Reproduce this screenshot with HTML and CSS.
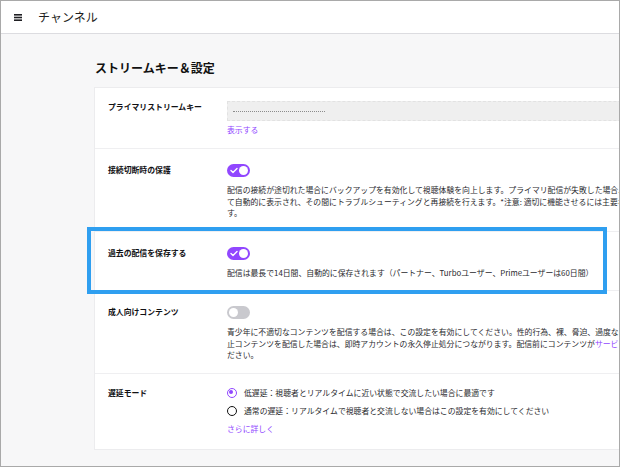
FILE: index.html
```html
<!DOCTYPE html>
<html lang="ja">
<head>
<meta charset="utf-8">
<title>チャンネル</title>
<link rel="stylesheet" href="styles.css">
</head>
<body>
<div class="frame">
  <header class="topbar">
    <svg class="menu-icon" width="8" height="7" viewBox="0 0 8 7" aria-hidden="true">
      <rect x="0" y="0" width="8" height="1.6"/>
      <rect x="0" y="2.7" width="8" height="1.6"/>
      <rect x="0" y="5.4" width="8" height="1.6"/>
    </svg>
    <span class="topbar-title">チャンネル</span>
  </header>

  <main class="page">
    <h1 class="page-title">ストリームキー＆設定</h1>

    <section class="card">
      <div class="row row-key">
        <div class="row-label">プライマリストリームキー</div>
        <div class="row-body">
          <div class="key-field"><span class="key-mask"></span></div>
          <a class="link show-link">表示する</a>
        </div>
      </div>

      <div class="row">
        <div class="row-label">接続切断時の保護</div>
        <div class="row-body">
          <span class="toggle on">
            <svg class="check" width="8" height="7" viewBox="0 0 8 7" aria-hidden="true"><polyline points="1,3.6 3,5.5 7,1.5"/></svg>
          </span>
          <p class="desc">配信の接続が途切れた場合にバックアップを有効化して視聴体験を向上します。プライマリ配信が失敗した場合、バックアップ用の配信が視聴者に対して自動的に表示され、その間にトラブルシューティングと再接続を行えます。*注意: 適切に機能させるには主要な配信ソフトウェアサポートが必要です。</p>
        </div>
      </div>

      <div class="row row-highlighted">
        <div class="row-label">過去の配信を保存する</div>
        <div class="row-body">
          <span class="toggle on">
            <svg class="check" width="8" height="7" viewBox="0 0 8 7" aria-hidden="true"><polyline points="1,3.6 3,5.5 7,1.5"/></svg>
          </span>
          <p class="desc">配信は最長で14日間、自動的に保存されます（パートナー、Turboユーザー、Primeユーザーは60日間）</p>
        </div>
        <span class="highlight"></span>
      </div>

      <div class="row">
        <div class="row-label">成人向けコンテンツ</div>
        <div class="row-body">
          <span class="toggle off"></span>
          <p class="desc">青少年に不適切なコンテンツを配信する場合は、この設定を有効にしてください。性的行為、裸、脅迫、過度な暴力などは、常に禁止されています。禁止コンテンツを配信した場合は、即時アカウントの永久停止処分につながります。配信前にコンテンツが<a class="link">サービス規約</a>を守っているかを必ず確認してください。</p>
        </div>
      </div>

      <div class="row row-delay">
        <div class="row-label">遅延モード</div>
        <div class="row-body">
          <div class="radio-option"><span class="radio checked"></span><span>低遅延：視聴者とリアルタイムに近い状態で交流したい場合に最適です</span></div>
          <div class="radio-option"><span class="radio"></span><span>通常の遅延：リアルタイムで視聴者と交流しない場合はこの設定を有効にしてください</span></div>
          <a class="link more-link">さらに詳しく</a>
        </div>
      </div>
    </section>
  </main>
</div>
</body>
</html>
```

FILE: styles.css
```css
html, body {
  margin: 0;
  padding: 0;
  width: 620px;
  height: 467px;
  overflow: hidden;
}

.frame {
  width: 620px;
  height: 467px;
  box-sizing: border-box;
  border: 1px solid #a9a9a9;
  overflow: hidden;
  background: #f7f7f8;
  font-family: "Noto Sans CJK JP", "Noto Sans", sans-serif;
  color: #1f1f23;
}

.topbar {
  height: 32px;
  background: #fff;
  border-bottom: 1px solid #dcdce0;
  display: flex;
  align-items: center;
  gap: 16px;
  padding-left: 13px;
}

.menu-icon {
  fill: #1f1f23;
  flex: none;
}

.topbar-title {
  font-size: 12px;
  line-height: 16px;
  color: #1f1f23;
}

.page {
  padding: 26px 0 0 94px;
}

.page-title {
  margin: 0 0 12px;
  font-size: 12px;
  line-height: 16px;
  font-weight: 700;
  color: #111;
}

.card {
  width: 680px;
  background: #fff;
  box-shadow: 0 0 0 1px #ececee;
}

.row {
  display: grid;
  grid-template-columns: 119px 535px;
  padding: 15px 13px 12px;
}

.row + .row {
  border-top: 1px solid #efeff1;
}

.row-key {
  padding-top: 13px;
}

.row-delay {
  padding-top: 13px;
  padding-bottom: 14px;
}

.row-highlighted {
  position: relative;
}

.highlight {
  position: absolute;
  top: -5px;
  left: -8px;
  width: 520px;
  height: 67px;
  box-sizing: border-box;
  border: 4px solid #2f9ff0;
  pointer-events: none;
}

.row-label {
  font-size: 7.85px;
  line-height: 12px;
  font-weight: 700;
  color: #111114;
}

.row-body {
  min-width: 0;
}

.key-field {
  height: 20px;
  box-sizing: border-box;
  background: #efefef;
  border: 1px dashed #e2e2e2;
  display: flex;
  align-items: center;
  padding-left: 5px;
}

.key-mask {
  width: 92px;
  height: 0;
  border-top: 1px dotted #8c8c8c;
}

.link {
  color: #9147ff;
  text-decoration: none;
}

.show-link,
.more-link {
  display: block;
  font-size: 7.85px;
  line-height: 12px;
}

.show-link {
  margin-top: 3px;
}

.more-link {
  margin-top: 6.5px;
}

.toggle {
  display: block;
  position: relative;
  width: 23px;
  height: 13px;
  border-radius: 7px;
  box-sizing: border-box;
}

.toggle.on {
  background: #9147ff;
}

.toggle.off {
  background: #c9c9ce;
}

.toggle::after {
  content: "";
  position: absolute;
  top: 2px;
  width: 9px;
  height: 9px;
  border-radius: 50%;
  background: #fff;
}

.toggle.on::after {
  right: 2px;
}

.toggle.off::after {
  left: 2px;
}

.check {
  position: absolute;
  left: 3px;
  top: 3px;
  fill: none;
  stroke: #fff;
  stroke-width: 1.4;
  stroke-linecap: round;
  stroke-linejoin: round;
}

.desc {
  margin: 7px 0 0;
  font-size: 7.85px;
  line-height: 11.5px;
  color: #2a2a2e;
}

.radio-option {
  display: flex;
  align-items: center;
  gap: 7px;
  font-size: 7.85px;
  line-height: 12px;
  color: #2a2a2e;
}

.radio-option + .radio-option {
  margin-top: 6px;
}

.radio {
  flex: none;
  position: relative;
  width: 10px;
  height: 10px;
  box-sizing: border-box;
  border-radius: 50%;
  border: 1.7px solid #111;
  background: #fff;
}

.radio.checked {
  border-color: #9147ff;
}

.radio.checked::after {
  content: "";
  position: absolute;
  left: 1.3px;
  top: 1.3px;
  width: 4px;
  height: 4px;
  border-radius: 50%;
  background: #9147ff;
}
```
